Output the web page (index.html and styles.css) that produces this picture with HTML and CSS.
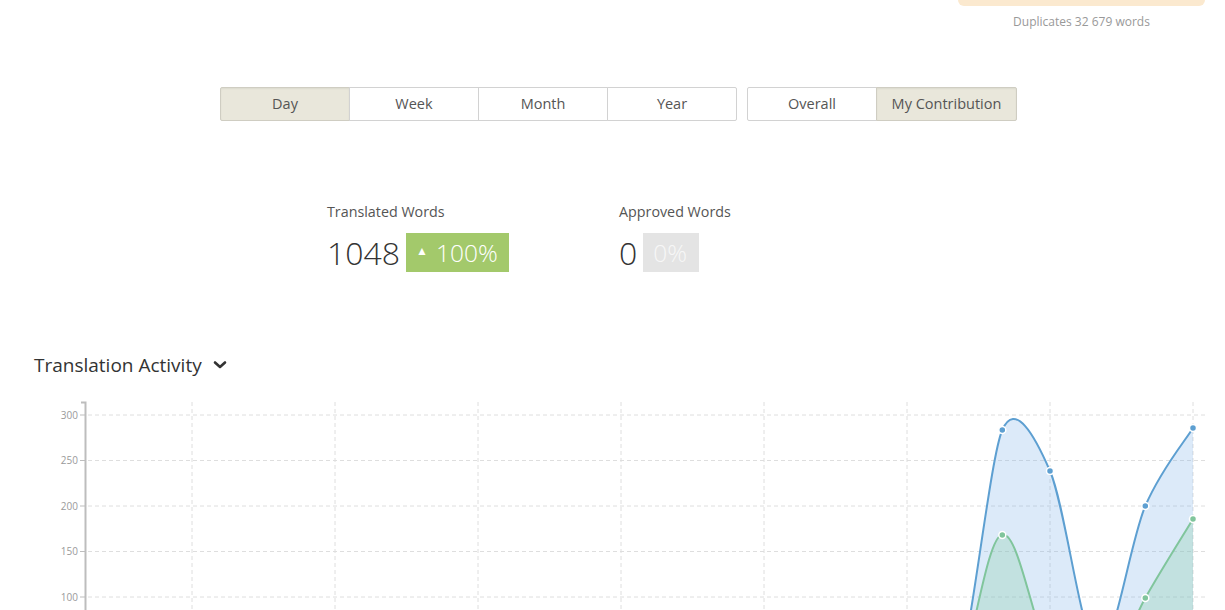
FILE: index.html
```html
<!DOCTYPE html>
<html>
<head>
<meta charset="utf-8">
<link rel="stylesheet" href="styles.css">
</head>
<body>
<div class="top">
  <div class="dup-box">
    <div class="dup-bar"></div>
    <div class="dup-text">Duplicates 32 679 words</div>
  </div>
</div>

<div class="periods">
  <div class="group">
    <div class="btn active">Day</div>
    <div class="btn">Week</div>
    <div class="btn">Month</div>
    <div class="btn">Year</div>
  </div>
  <div class="group">
    <div class="btn">Overall</div>
    <div class="btn active wide">My Contribution</div>
  </div>
</div>

<div class="stats">
  <div class="stat">
    <div class="stat-label">Translated Words</div>
    <div class="stat-row">
      <span class="stat-num">1048</span>
      <span class="badge green"><span class="tri">▲</span>100%</span>
    </div>
  </div>
  <div class="stat">
    <div class="stat-label">Approved Words</div>
    <div class="stat-row">
      <span class="stat-num">0</span>
      <span class="badge grey">0%</span>
    </div>
  </div>
</div>

<div class="title">
  <span>Translation Activity</span>
  <svg class="chev" width="14" height="10" viewBox="0 0 14 10"><path d="M2 2.5 L7 7 L12 2.5" fill="none" stroke="#333" stroke-width="2.6" stroke-linecap="round" stroke-linejoin="round"/></svg>
</div>

<svg class="chart" width="1225" height="215" viewBox="0 0 1225 215">
  <g stroke="#dedede" stroke-width="1" stroke-dasharray="4 3" fill="none">
    <line x1="88" y1="20" x2="1205" y2="20"/>
    <line x1="88" y1="65.5" x2="1205" y2="65.5"/>
    <line x1="88" y1="111" x2="1205" y2="111"/>
    <line x1="88" y1="156.5" x2="1205" y2="156.5"/>
    <line x1="88" y1="202" x2="1205" y2="202"/>
    <line x1="192" y1="7" x2="192" y2="215"/>
    <line x1="335" y1="7" x2="335" y2="215"/>
    <line x1="478" y1="7" x2="478" y2="215"/>
    <line x1="621" y1="7" x2="621" y2="215"/>
    <line x1="764" y1="7" x2="764" y2="215"/>
    <line x1="907" y1="7" x2="907" y2="215"/>
    <line x1="1050" y1="7" x2="1050" y2="215"/>
    <line x1="1193" y1="7" x2="1193" y2="215"/>
  </g>
  <g stroke="#bdbdbd" fill="none">
    <path d="M81 7.5 H85.5 V215" stroke-width="2"/>
    <line x1="80" y1="20" x2="85" y2="20"/>
    <line x1="80" y1="65.5" x2="85" y2="65.5"/>
    <line x1="80" y1="111" x2="85" y2="111"/>
    <line x1="80" y1="156.5" x2="85" y2="156.5"/>
    <line x1="80" y1="202" x2="85" y2="202"/>
  </g>
  <g class="ylab" text-anchor="end">
    <text x="78" y="23.5">300</text>
    <text x="78" y="69">250</text>
    <text x="78" y="114.5">200</text>
    <text x="78" y="160">150</text>
    <text x="78" y="205.5">100</text>
  </g>
  <path d="M907 293 L954.7 293 C970.6 250 989.6 64 1002.3 35 C1015 6 1034.1 39.3 1050 76 C1065.9 112.7 1081.8 249.2 1097.7 255 C1113.6 260.8 1129.4 148 1145.3 111 C1161.2 74 1185.1 46 1193 33 L1193 293 Z" fill="rgba(130,180,235,0.28)"/>
  <path d="M907 293 L954.7 293 C970.6 267.5 986.4 140 1002.3 140 C1018.2 134.5 1034.1 234.5 1050 260 C1065.9 285.5 1081.8 302.5 1097.7 293 C1113.6 283.5 1129.4 231.2 1145.3 203 C1161.2 174.8 1185.1 137.2 1193 124 L1193 293 Z" fill="rgba(140,205,170,0.32)"/>
  <path d="M907 293 L954.7 293 C970.6 250 989.6 64 1002.3 35 C1015 6 1034.1 39.3 1050 76 C1065.9 112.7 1081.8 249.2 1097.7 255 C1113.6 260.8 1129.4 148 1145.3 111 C1161.2 74 1185.1 46 1193 33" fill="none" stroke="#5d9fd1" stroke-width="2"/>
  <path d="M907 293 L954.7 293 C970.6 267.5 986.4 140 1002.3 140 C1018.2 134.5 1034.1 234.5 1050 260 C1065.9 285.5 1081.8 302.5 1097.7 293 C1113.6 283.5 1129.4 231.2 1145.3 203 C1161.2 174.8 1185.1 137.2 1193 124" fill="none" stroke="#80c59c" stroke-width="2"/>
  <g fill="#5d9fd1" stroke="#fff" stroke-width="1.5">
    <circle cx="1002.3" cy="35" r="3.5"/>
    <circle cx="1050" cy="76" r="3.5"/>
    <circle cx="1145.3" cy="111" r="3.5"/>
    <circle cx="1193" cy="33" r="3.5"/>
  </g>
  <g fill="#80c59c" stroke="#fff" stroke-width="1.5">
    <circle cx="1002.3" cy="140" r="3.5"/>
    <circle cx="1145.3" cy="203" r="3.5"/>
    <circle cx="1193" cy="124" r="3.5"/>
  </g>
</svg>
</body>
</html>
```

FILE: styles.css
```css
html, body {
  margin: 0;
  padding: 0;
  background: #fff;
  font-family: "Open Sans", "Liberation Sans", sans-serif;
  color: #333;
  overflow: hidden;
}

.top {
  display: flex;
  justify-content: flex-end;
  padding-right: 20px;
}

.dup-box {
  width: 247px;
}

.dup-bar {
  height: 6px;
  background: #fbe9cf;
  border-radius: 0 0 6px 6px;
}

.dup-text {
  margin-top: 8px;
  font-size: 12px;
  line-height: 15px;
  color: #999;
  text-align: center;
}

.periods {
  display: flex;
  gap: 10px;
  margin-top: 58px;
  margin-left: 220px;
}

.group {
  display: flex;
}

.btn {
  width: 128px;
  height: 32px;
  line-height: 32px;
  border: 1px solid #d2d2d2;
  margin-left: -1px;
  text-align: center;
  font-size: 14.5px;
  color: #555;
  background: #fff;
}

.btn:first-child {
  margin-left: 0;
  border-radius: 2px 0 0 2px;
}

.btn:last-child {
  border-radius: 0 2px 2px 0;
}

.btn.active {
  background: #e9e7db;
  border-color: #cfcdc2;
  box-shadow: inset 0 1px 2px rgba(0,0,0,0.06);
}

.btn.wide {
  width: 139px;
}

.stats {
  display: flex;
  margin-top: 81px;
  margin-left: 327px;
}

.stat {
  width: 292px;
}

.stat-label {
  font-size: 14.3px;
  line-height: 20px;
  color: #555;
}

.stat-row {
  display: flex;
  align-items: center;
  gap: 6px;
  margin-top: 11px;
  height: 39px;
}

.stat-num {
  font-size: 32px;
  font-weight: 300;
  color: #333;
  line-height: 39px;
}

.badge {
  height: 39px;
  line-height: 39px;
  padding: 0 11px 0 10px;
  font-size: 24.5px;
  font-weight: 300;
  color: #fff;
  display: flex;
  align-items: center;
}

.badge.green {
  background: #a3c96b;
}

.badge.grey {
  background: #e4e4e4;
  color: #f7f7f7;
  padding: 0 12px 0 10px;
}

.tri {
  font-size: 12px;
  margin-right: 8px;
  position: relative;
  top: -2px;
}

.title {
  margin-top: 80px;
  margin-left: 34px;
  display: flex;
  align-items: center;
  gap: 11px;
  font-size: 19px;
  line-height: 26px;
  color: #333;
}

.chev {
  display: block;
}

.chart {
  display: block;
  margin-top: 17px;
}

.ylab text {
  font-family: "Open Sans", "Liberation Sans", sans-serif;
  font-size: 10px;
  fill: #9a9a9a;
}
```
